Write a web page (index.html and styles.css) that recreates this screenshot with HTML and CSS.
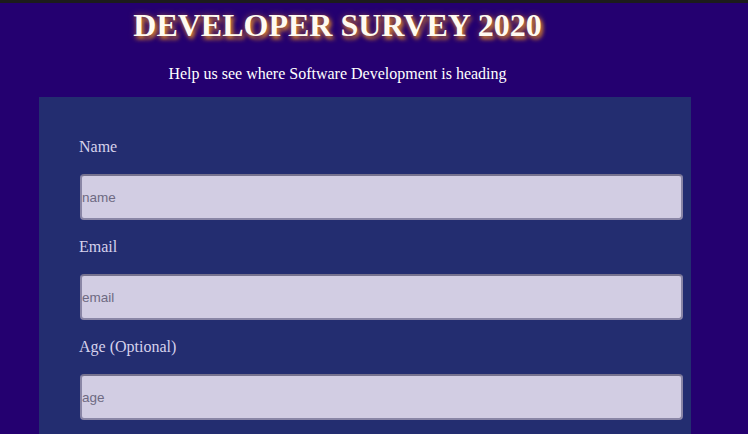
FILE: index.html
```html
<!DOCTYPE html>
<html>
<head>
<meta charset="utf-8">
<link rel="stylesheet" href="styles.css">
</head>
<body>
<header class="header">
  <h1 class="title">DEVELOPER SURVEY 2020</h1>
  <p class="subtitle">Help us see where Software Development is heading</p>
</header>
<form class="survey">
  <label class="label" for="name">Name</label>
  <input class="field" id="name" type="text" placeholder="name">
  <label class="label" for="email">Email</label>
  <input class="field" id="email" type="email" placeholder="email">
  <label class="label" for="age">Age (Optional)</label>
  <input class="field" id="age" type="number" placeholder="age">
</form>
</body>
</html>
```
FILE: styles.css
```css
html, body {
  margin: 0;
  padding: 0;
}
body {
  background: #240070;
  border-top: 3px solid #1c1c1c;
  font-family: "Liberation Serif", "Times New Roman", serif;
  overflow: hidden;
}
.header {
  padding: 0 73px 0 0;
  text-align: center;
}
.title {
  margin: 0;
  padding-top: 3px;
  font-size: 32px;
  line-height: 38px;
  font-weight: bold;
  color: #fffaf0;
  text-shadow: 2px 3px 4px #d9822b, 0 0 6px rgba(217, 130, 43, 0.6);
}
.subtitle {
  margin: 21px 0 0;
  font-size: 16px;
  line-height: 18px;
  color: #ffffff;
}
.survey {
  margin: 14px 57px 0 39px;
  padding: 41px 8px 20px 41px;
  background: #232d70;
  display: flex;
  flex-direction: column;
  align-items: flex-start;
}
.label {
  display: block;
  font-size: 16px;
  line-height: 18px;
  color: #d6d2ec;
  margin: 0 0 18px -1px;
}
.field {
  box-sizing: border-box;
  width: 603px;
  height: 46px;
  margin: 0 0 18px;
  padding: 0;
  background: #d2cde3;
  border: 2px solid #8a86a6;
  border-top-color: #77738f;
  border-radius: 4px;
  font-family: Arial, "Liberation Sans", sans-serif;
  font-size: 13.5px;
  color: #333;
  outline: none;
}
.field::placeholder {
  color: #6e6a82;
}
.field::-webkit-outer-spin-button,
.field::-webkit-inner-spin-button {
  -webkit-appearance: none;
  margin: 0;
}
```
